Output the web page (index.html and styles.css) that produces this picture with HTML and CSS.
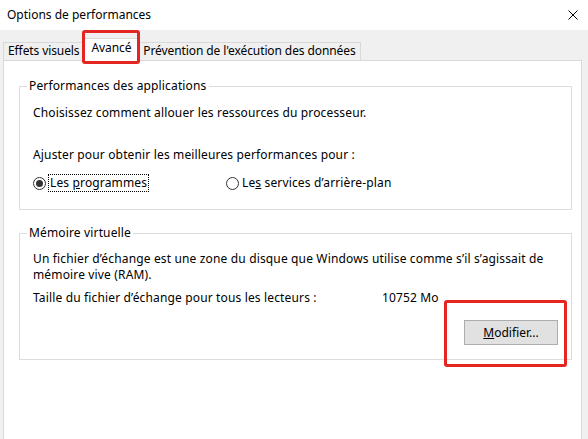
FILE: index.html
```html
<!DOCTYPE html>
<html lang="fr">
<head>
<meta charset="utf-8">
<title>Options de performances</title>
<link rel="stylesheet" href="styles.css">
</head>
<body>
<div class="window">
  <div class="titlebar">
    <span class="title">Options de performances</span>
    <svg class="close" width="10" height="10" viewBox="0 0 10 10"><path d="M0.5 0.5L9.5 9.5M9.5 0.5L0.5 9.5" stroke="#000" stroke-width="1" fill="none"/></svg>
  </div>
  <div class="content">
    <div class="tabs">
      <div class="tab">Effets visuels</div>
      <div class="tab active">Avancé</div>
      <div class="tab">Prévention de l'exécution des données</div>
    </div>
    <div class="panel">
      <fieldset class="group perf">
        <legend>Performances des applications</legend>
        <p class="line">Choisissez comment allouer les ressources du processeur.</p>
        <p class="line adjust">Ajuster pour obtenir les meilleures performances pour :</p>
        <div class="radios">
          <div class="radio first"><span class="dot checked"></span><span class="focus">Les <u>p</u>rogrammes</span></div>
          <div class="radio second"><span class="dot"></span><span class="rlabel">Le<u>s</u> services d’arrière-plan</span></div>
        </div>
      </fieldset>
      <fieldset class="group mem">
        <legend>Mémoire virtuelle</legend>
        <p class="line">Un fichier d’échange est une zone du disque que Windows utilise comme s’il s’agissait de<br>mémoire vive (RAM).</p>
        <div class="size">
          <span class="size-label">Taille du fichier d’échange pour tous les lecteurs :</span>
          <span class="size-value">10752 Mo</span>
        </div>
        <div class="actions">
          <button class="btn" type="button"><u>M</u>odifier...</button>
        </div>
      </fieldset>
    </div>
  </div>
  <div class="mark mark-tab"></div>
  <div class="mark mark-btn"></div>
</div>
</body>
</html>
```

FILE: styles.css
```css
html, body {
  margin: 0;
  padding: 0;
}

body {
  width: 588px;
  height: 439px;
  overflow: hidden;
  background: #f0f0f0;
  font-family: "Noto Sans", "Open Sans", sans-serif;
  font-size: 12px;
  letter-spacing: 0.15px;
  color: #000;
}

.window {
  position: relative;
  height: 445px;
  display: flex;
  flex-direction: column;
}

.titlebar {
  height: 30px;
  flex: none;
  background: #fff;
  display: flex;
  align-items: center;
  justify-content: space-between;
  padding: 0 10px 0 7px;
}

.title {
  font-size: 12px;
  letter-spacing: 0;
  line-height: 16px;
}

.content {
  flex: 1;
  display: flex;
  flex-direction: column;
  padding: 0 6px 0 3px;
}

.tabs {
  height: 30px;
  flex: none;
  display: flex;
  align-items: flex-end;
}

.tab {
  height: 18px;
  box-sizing: border-box;
  border: 1px solid #d9d9d9;
  border-bottom: none;
  padding: 0 4px;
  line-height: 16px;
  letter-spacing: -0.1px;
  background: #f0f0f0;
  white-space: nowrap;
}

.tab.active {
  height: 23px;
  margin: 0 -1px -1px;
  padding: 0 7px 4px;
  line-height: 18px;
  background: #fff;
  position: relative;
  z-index: 1;
}

.panel {
  flex: 1;
  background: #fff;
  border: 1px solid #d9d9d9;
  display: flex;
  flex-direction: column;
}

.group {
  margin: 17px 9px 0 15px;
  padding: 11px 13px 17px;
  border: 1px solid #dcdcdc;
  min-width: 0;
}

.group legend {
  padding: 0 2px;
  margin-left: -6px;
  line-height: 16px;
}

.line {
  margin: 0;
  line-height: 16px;
  white-space: nowrap;
}

.adjust {
  margin-top: 26px;
}

.radios {
  display: flex;
  align-items: center;
  height: 18px;
  margin-top: 11px;
}

.radio {
  display: flex;
  align-items: center;
}

.radio.first {
  width: 193px;
}

.dot {
  width: 13px;
  height: 13px;
  box-sizing: border-box;
  border: 1px solid #333;
  border-radius: 50%;
  display: flex;
  align-items: center;
  justify-content: center;
  margin-right: 2px;
}

.dot.checked::after {
  content: "";
  width: 7px;
  height: 7px;
  border-radius: 50%;
  background: #333;
}

.focus {
  border: 1px dotted #000;
  padding: 0 1px;
  line-height: 16px;
}

.rlabel {
  padding-left: 1px;
  line-height: 16px;
}

.mem {
  margin-top: 15px;
  padding: 10px 13px 14px;
}

.size {
  display: flex;
  margin-top: 7px;
  line-height: 16px;
}

.size-label {
  width: 349px;
  flex: none;
}

.actions {
  display: flex;
  justify-content: flex-end;
  margin-top: 14px;
}

.btn {
  width: 94px;
  height: 25px;
  box-sizing: border-box;
  background: #e1e1e1;
  border: 1px solid #adadad;
  font: inherit;
  color: #000;
  padding: 0;
}

.mark {
  position: absolute;
  box-sizing: border-box;
  border: 3px solid #e3261f;
  border-radius: 3px;
  z-index: 5;
}

.mark-tab {
  left: 82px;
  top: 30px;
  width: 58px;
  height: 34px;
}

.mark-btn {
  left: 444px;
  top: 300px;
  width: 123px;
  height: 67px;
}
```
